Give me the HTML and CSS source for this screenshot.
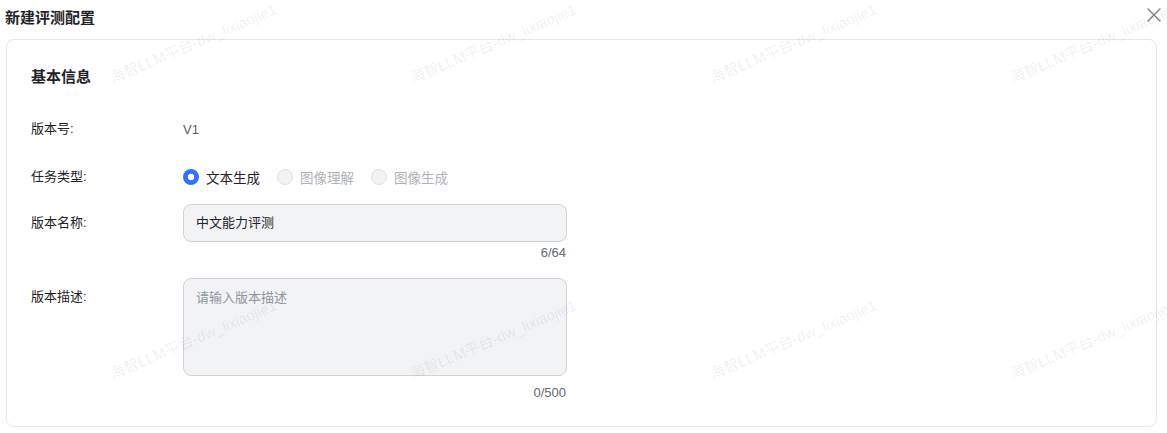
FILE: index.html
```html
<!DOCTYPE html>
<html lang="zh-CN">
<head>
<meta charset="utf-8">
<title>新建评测配置</title>
<link rel="stylesheet" href="styles.css">
</head>
<body>
<div class="modal">
  <div class="modal-header">
    <div class="modal-title">新建评测配置</div>
    <svg class="close" width="16" height="16" viewBox="0 0 16 16" aria-hidden="true">
      <path d="M2 2 L14 14 M14 2 L2 14" stroke="#7a7f87" stroke-width="1.4" stroke-linecap="round" fill="none"/>
    </svg>
  </div>
  <div class="card">
    <div class="section-title">基本信息</div>
    <div class="form-item first">
      <div class="label">版本号:</div>
      <div class="value text-grey">V1</div>
    </div>
    <div class="form-item gap10">
      <div class="label">任务类型:</div>
      <div class="value radios">
        <label class="radio checked"><span class="dot"></span><span class="rtext">文本生成</span></label>
        <label class="radio disabled"><span class="dot"></span><span class="rtext">图像理解</span></label>
        <label class="radio disabled"><span class="dot"></span><span class="rtext">图像生成</span></label>
      </div>
    </div>
    <div class="form-item gap8">
      <div class="label">版本名称:</div>
      <div class="value">
        <div class="input">中文能力评测</div>
      </div>
    </div>
    <div class="counter-row c1">
      <div class="counter">6/64</div>
    </div>
    <div class="form-item top gap16">
      <div class="label">版本描述:</div>
      <div class="value">
        <div class="textarea"><span class="placeholder">请输入版本描述</span></div>
      </div>
    </div>
    <div class="counter-row c2">
      <div class="counter">0/500</div>
    </div>
  </div>
</div>
<div class="watermark" aria-hidden="true">
  <div class="wm-cell"><span>海智LLM平台-dw_lixiaojie1</span></div>
  <div class="wm-cell"><span>海智LLM平台-dw_lixiaojie1</span></div>
  <div class="wm-cell"><span>海智LLM平台-dw_lixiaojie1</span></div>
  <div class="wm-cell"><span>海智LLM平台-dw_lixiaojie1</span></div>
  <div class="wm-cell"><span>海智LLM平台-dw_lixiaojie1</span></div>
  <div class="wm-cell"><span>海智LLM平台-dw_lixiaojie1</span></div>
  <div class="wm-cell"><span>海智LLM平台-dw_lixiaojie1</span></div>
  <div class="wm-cell"><span>海智LLM平台-dw_lixiaojie1</span></div>
</div>
</body>
</html>
```
FILE: styles.css
```css
* { box-sizing: border-box; }
html, body {
  margin: 0;
  padding: 0;
  background: #ffffff;
}
body {
  font-family: "Liberation Sans", "Noto Sans CJK SC", sans-serif;
  color: #1f2329;
  font-size: 13px;
  width: 1167px;
  height: 433px;
  overflow: hidden;
  position: relative;
}
.modal {
  display: flex;
  flex-direction: column;
}
.modal-header {
  display: flex;
  justify-content: space-between;
  align-items: flex-start;
  height: 39px;
  padding: 0 5px 0 5px;
}
.modal-title {
  font-size: 15px;
  font-weight: 700;
  line-height: 22px;
  margin-top: 7px;
  color: #1f2329;
}
.close {
  margin-top: 7px;
  display: block;
}
.card {
  margin: 0 10px 0 6px;
  border: 1px solid #e6e7e9;
  border-radius: 8px;
  padding: 26px 24px 24px 24px;
  display: flex;
  flex-direction: column;
}
.section-title {
  font-size: 15px;
  font-weight: 700;
  line-height: 22px;
  color: #1f2329;
}
.form-item {
  display: flex;
  align-items: center;
  min-height: 38px;
}
.form-item.first { margin-top: 22px; }
.form-item.gap10 { margin-top: 10px; }
.form-item.gap8 { margin-top: 8px; }
.form-item.gap16 { margin-top: 16px; }
.form-item.top { align-items: flex-start; }
.label {
  width: 152px;
  flex: none;
  line-height: 38px;
  color: #1f2329;
}
.value {
  display: flex;
  align-items: center;
}
.text-grey { color: #575d66; }
.radios { gap: 17px; }
.radio {
  display: flex;
  align-items: center;
  gap: 7px;
}
.rtext { font-size: 13.5px; }
.dot {
  width: 16px;
  height: 16px;
  border-radius: 50%;
  flex: none;
}
.radio.checked .dot {
  background: radial-gradient(circle, #ffffff 0 3px, #3370ff 3.6px);
}
.radio.checked .rtext { color: #1f2329; }
.radio.disabled .dot {
  background: #f2f3f5;
  border: 1px solid #dee0e3;
}
.radio.disabled .rtext { color: #aeb2b8; }
.input {
  width: 384px;
  height: 38px;
  background: #f2f3f5;
  border: 1px solid #d0d3d8;
  border-radius: 8px;
  padding: 0 12px;
  line-height: 36px;
  color: #1f2329;
}
.textarea {
  width: 384px;
  height: 98px;
  background: #f2f3f5;
  border: 1px solid #d0d3d8;
  border-radius: 8px;
  padding: 9px 12px;
  line-height: 20px;
}
.placeholder { color: #8f959e; }
.counter-row {
  display: flex;
  padding-left: 152px;
}
.counter-row.c1 { margin-top: 2px; }
.counter-row.c2 { margin-top: 8px; }
.counter {
  width: 384px;
  text-align: right;
  padding-right: 1px;
  line-height: 18px;
  font-size: 13px;
  color: #646a73;
}
.watermark {
  position: absolute;
  left: 0;
  top: 0;
  width: 1167px;
  height: 433px;
  overflow: hidden;
  padding-left: 43px;
  display: grid;
  grid-template-columns: repeat(4, 300px);
  grid-template-rows: 84px 84px;
  row-gap: 212px;
  pointer-events: none;
}
.wm-cell {
  display: flex;
  align-items: center;
  justify-content: center;
}
.wm-cell span {
  display: block;
  transform: rotate(-23deg);
  white-space: nowrap;
  font-size: 15px;
  color: rgba(0, 0, 0, 0.075);
  font-family: "Liberation Sans", "Noto Sans CJK SC", sans-serif;
}
```
